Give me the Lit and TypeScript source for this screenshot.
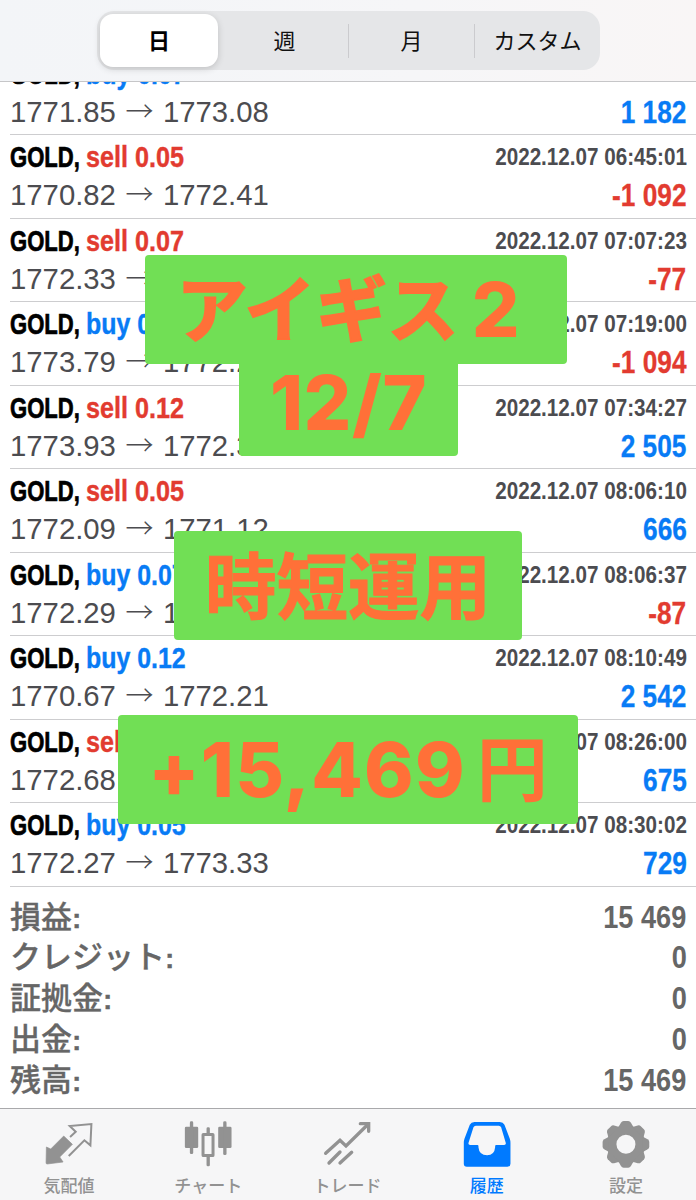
import { LitElement, html, css, svg } from "lit";
import { customElement, property } from "lit/decorators.js";

interface Trade {
  side: "buy" | "sell";
  lot: string;
  open: string;
  close: string;
  time: string;
  profit: string;
}

const TRADES: Trade[] = [
  { side: "buy", lot: "0.07", open: "1771.85", close: "1773.08", time: "2022.12.07 06:30:01", profit: "1 182" },
  { side: "sell", lot: "0.05", open: "1770.82", close: "1772.41", time: "2022.12.07 06:45:01", profit: "-1 092" },
  { side: "sell", lot: "0.07", open: "1772.33", close: "1772.41", time: "2022.12.07 07:07:23", profit: "-77" },
  { side: "buy", lot: "0.12", open: "1773.79", close: "1772.21", time: "2022.12.07 07:19:00", profit: "-1 094" },
  { side: "sell", lot: "0.12", open: "1773.93", close: "1772.38", time: "2022.12.07 07:34:27", profit: "2 505" },
  { side: "sell", lot: "0.05", open: "1772.09", close: "1771.12", time: "2022.12.07 08:06:10", profit: "666" },
  { side: "buy", lot: "0.07", open: "1772.29", close: "1772.20", time: "2022.12.07 08:06:37", profit: "-87" },
  { side: "buy", lot: "0.12", open: "1770.67", close: "1772.21", time: "2022.12.07 08:10:49", profit: "2 542" },
  { side: "sell", lot: "0.07", open: "1772.68", close: "1771.98", time: "2022.12.07 08:26:00", profit: "675" },
  { side: "buy", lot: "0.05", open: "1772.27", close: "1773.33", time: "2022.12.07 08:30:02", profit: "729" },
];

const SUMMARY = [
  ["損益", "15 469"],
  ["クレジット", "0"],
  ["証拠金", "0"],
  ["出金", "0"],
  ["残高", "15 469"],
];

@customElement("trade-row")
export class TradeRow extends LitElement {
  @property({ attribute: false }) trade!: Trade;

  static styles = css`
    :host {
      display: block;
      box-sizing: border-box;
      height: 83.5px;
      margin-left: 10px;
      padding: 2px 9.5px 0 0;
      border-bottom: 1px solid #cdcdcf;
      font-family: "Liberation Sans", sans-serif;
      color: #4c4c50;
      white-space: nowrap;
    }
    .line { display: flex; justify-content: space-between; height: 40px; line-height: 40px; }
    .line.second { height: 37px; line-height: 37px; }
    .title { display: flex; font-size: 30px; font-weight: 700; -webkit-text-stroke: 0.4px currentColor; }
    .symbol { width: 75.5px; color: #000; }
    .symbol span, .side span { display: inline-block; transform-origin: 0 50%; transform: scaleX(0.735); }
    .symbol span { -webkit-text-stroke: 0.7px currentColor; }
    .sell span { transform: scaleX(0.84); }
    .buy span { transform: scaleX(0.83); }
    .buy { color: #087bf5; }
    .sell { color: #e23b30; }
    .time, .profit { font-weight: 700; transform-origin: 100% 50%; transform: scaleX(0.86); }
    .time { font-size: 24px; }
    .profit { font-size: 30.5px; -webkit-text-stroke: 0.3px currentColor; }
    .prices { display: flex; align-items: baseline; font-size: 29.3px; line-height: 33px; }
    .arrow { width: 47px; text-align: center; font-family: "Noto Sans CJK JP", sans-serif; font-weight: 300; font-size: 28px; }
  `;

  render() {
    const t = this.trade;
    return html`
      <div class="line">
        <div class="title">
          <div class="symbol"><span>GOLD,</span></div>
          <div class="side ${t.side}"><span>${t.side} ${t.lot}</span></div>
        </div>
        <div class="time">${t.time}</div>
      </div>
      <div class="line second">
        <div class="prices"><span>${t.open}</span><span class="arrow">→</span><span>${t.close}</span></div>
        <div class="profit ${t.profit.startsWith("-") ? "sell" : "buy"}">${t.profit}</div>
      </div>
    `;
  }
}

const quotesIcon = svg`
  <path d="M190 108 L216 133 L178 171 L188 186 L140 192 Q137 192 137 188 L138 141 L151 147 Z" fill="currentColor" stroke="currentColor" stroke-width="2" stroke-linejoin="round"/>
  <path d="M209 111 L226 95 L208 78 L273 72 L270 136 L252 121 L205 168" fill="none" stroke="currentColor" stroke-width="6"/>`;
const chartIcon = svg`
  <g fill="currentColor">
    <rect x="554" y="80" width="40" height="64" rx="4"/><rect x="569" y="64" width="10" height="98" rx="4"/>
    <rect x="654" y="80" width="40" height="64" rx="4"/><rect x="669" y="64" width="10" height="101" rx="4"/>
    <rect x="619" y="82" width="10" height="24" rx="4"/><rect x="619" y="164" width="10" height="35" rx="4"/>
  </g>
  <rect x="608.5" y="103.5" width="30" height="63" rx="1" fill="none" stroke="currentColor" stroke-width="9"/>`;
const tradeIcon = svg`
  <g fill="none" stroke="currentColor" stroke-width="10" stroke-linecap="round">
    <path d="M287 160 L330 121 L348 138 L415 72"/>
    <path d="M391 71 H416 V94"/>
    <path d="M297 189 L330 156 M330 189 L365 157"/>
  </g>`;
const historyIcon = svg`
  <path fill="currentColor" fill-rule="evenodd" d="M56 66 H132 Q142 66 146 74 L162 116 Q164 122 164 128 V191 Q164 200 155 200 H33 Q24 200 24 191 V128 Q24 122 26 116 L42 74 Q46 66 56 66 Z
    M60 77 Q55 77 53 82 L38 129 Q37 135 43 135 H65 Q68 135 68 139 V142 Q70 166 94 166 Q116 166 118 142 V139 Q118 135 121 135 H145 Q151 135 150 129 L136 82 Q134 77 129 77 Z"/>`;
const settingsIcon = svg`
  <g fill="currentColor">
    <circle cx="511" cy="133" r="43" fill="none" stroke="currentColor" stroke-width="29"/>
    ${[0, 45, 90, 135, 180, 225, 270, 315].map(
      (a) => svg`<path transform="rotate(${a} 511 133)" d="M488 82 L496 68 Q499 63 504 63 H518 Q523 63 526 68 L534 82 Z"/>`
    )}
  </g>`;

const TABS = [
  { label: "気配値", box: "127.8 54 162 150", icon: quotesIcon },
  { label: "チャート", box: "545.4 54 162 150", icon: chartIcon },
  { label: "トレード", box: "273 54 162 150", icon: tradeIcon },
  { label: "履歴", box: "12.6 54 162 150", icon: historyIcon, active: true },
  { label: "設定", box: "430.2 54 162 150", icon: settingsIcon },
];

@customElement("app-root")
export class AppRoot extends LitElement {
  static styles = css`
    :host {
      display: flex;
      flex-direction: column;
      position: relative;
      box-sizing: border-box;
      width: 696px;
      height: 1200px;
      overflow: hidden;
      background: #fff;
      font-family: "Liberation Sans", "Noto Sans CJK JP", sans-serif;
    }
    .header {
      position: relative;
      z-index: 1;
      box-sizing: border-box;
      flex: none;
      height: 82px;
      padding: 11px 0 0 97px;
      border-bottom: 1px solid #c6c6c8;
      background: linear-gradient(90deg, #f3f5f8, #f6f6f8 60%, #f9f6f6);
    }
    .segments {
      display: grid;
      grid-template-columns: 124px 127px 126px 126px;
      align-items: center;
      box-sizing: border-box;
      width: 503px;
      height: 59px;
      border-radius: 17px;
      background: #e5e6e8;
      font: 400 22px "Noto Sans CJK JP", sans-serif;
      color: #111;
    }
    .segment { display: flex; align-items: center; justify-content: center; box-sizing: border-box; height: 34px; padding-bottom: 4px; }
    .segment.ruled { border-left: 1px solid #cbcbce; }
    .segment.selected {
      height: 53px;
      margin: 0 3px;
      border-radius: 13px;
      background: #fff;
      box-shadow: 0 2px 7px rgba(0, 0, 0, 0.16);
      font-weight: 700;
      color: #000;
    }
    .history { flex: none; margin-top: -30.5px; height: 835.5px; }
    .summary { flex: 1; padding: 9.5px 9.5px 0 10px; color: #666; }
    .total { display: flex; justify-content: space-between; height: 40.8px; line-height: 40.8px; font-size: 30.5px; font-weight: 700; }
    .label { margin-top: -2px; font-family: "Noto Sans CJK JP", sans-serif; font-size: 31px; font-weight: 500; -webkit-text-stroke: 0.3px currentColor; }
    .colon { font-family: "Liberation Sans", sans-serif; font-weight: 700; font-size: 28px; }
    .value { transform-origin: 100% 50%; transform: scaleX(0.89); }
    .tabs {
      display: grid;
      grid-template-columns: repeat(5, 1fr);
      box-sizing: border-box;
      flex: none;
      height: 92px;
      border-top: 1px solid #a9a9ab;
      background: #f6f6f7;
      color: #929292;
    }
    .tab { display: flex; flex-direction: column; align-items: center; padding-top: 9px; font: 500 17px/34px "Noto Sans CJK JP", sans-serif; }
    .tab svg { display: block; width: 54px; height: 50px; }
    .tab span { margin-right: 1px; }
    .tab.active { color: #007aff; }
    .sticker {
      position: absolute;
      z-index: 2;
      display: flex;
      align-items: center;
      justify-content: center;
      box-sizing: border-box;
      border-radius: 4px;
      background: #71df55;
      color: #ff7038;
      font: 800 75px/1 Inter, "Noto Sans CJK JP", sans-serif;
      font-feature-settings: "calt" 0;
      white-space: pre;
    }
    .kana, .kanji, .yen { font-family: "Noto Sans CJK JP", sans-serif; font-weight: 700; }
    .kana { font-size: 71.5px; padding-bottom: 7px; -webkit-text-stroke: 1.8px currentColor; }
    .kanji { font-size: 71.5px; -webkit-text-stroke: 1px currentColor; }
    .yen { font-size: 71px; margin-left: 11px; padding-bottom: 11px; }
    .name { left: 145px; top: 255px; width: 422px; height: 109px; padding-right: 16px; }
    .name .digit { margin-left: 13px; }
    .date { left: 239px; top: 356px; width: 219px; height: 100px; padding-bottom: 7px; letter-spacing: 0.5px; }
    .mode { left: 174px; top: 531px; width: 348px; height: 109px; padding-bottom: 6px; }
    .gain { left: 118px; top: 715px; width: 460px; height: 109px; }
    .amount { letter-spacing: 1.2px; }
  `;

  render() {
    return html`
      <div class="header">
        <div class="segments">
          <div class="segment selected">日</div>
          <div class="segment">週</div>
          <div class="segment ruled">月</div>
          <div class="segment ruled">カスタム</div>
        </div>
      </div>
      <div class="history">${TRADES.map((t) => html`<trade-row .trade=${t}></trade-row>`)}</div>
      <div class="summary">
        ${SUMMARY.map(
          ([label, value]) => html`<div class="total">
            <div class="label">${label}<span class="colon">:</span></div>
            <div class="value">${value}</div>
          </div>`
        )}
      </div>
      <div class="tabs">
        ${TABS.map(
          (t) => html`<div class="tab ${t.active ? "active" : ""}">
            <svg viewBox=${t.box}>${t.icon}</svg>
            <span>${t.label}</span>
          </div>`
        )}
      </div>
      <div class="sticker date">12/7</div>
      <div class="sticker name"><span class="kana">アイギス</span><span class="digit">2</span></div>
      <div class="sticker mode"><span class="kanji">時短運用</span></div>
      <div class="sticker gain"><span class="amount">+15,469</span><span class="yen">円</span></div>
    `;
  }
}
